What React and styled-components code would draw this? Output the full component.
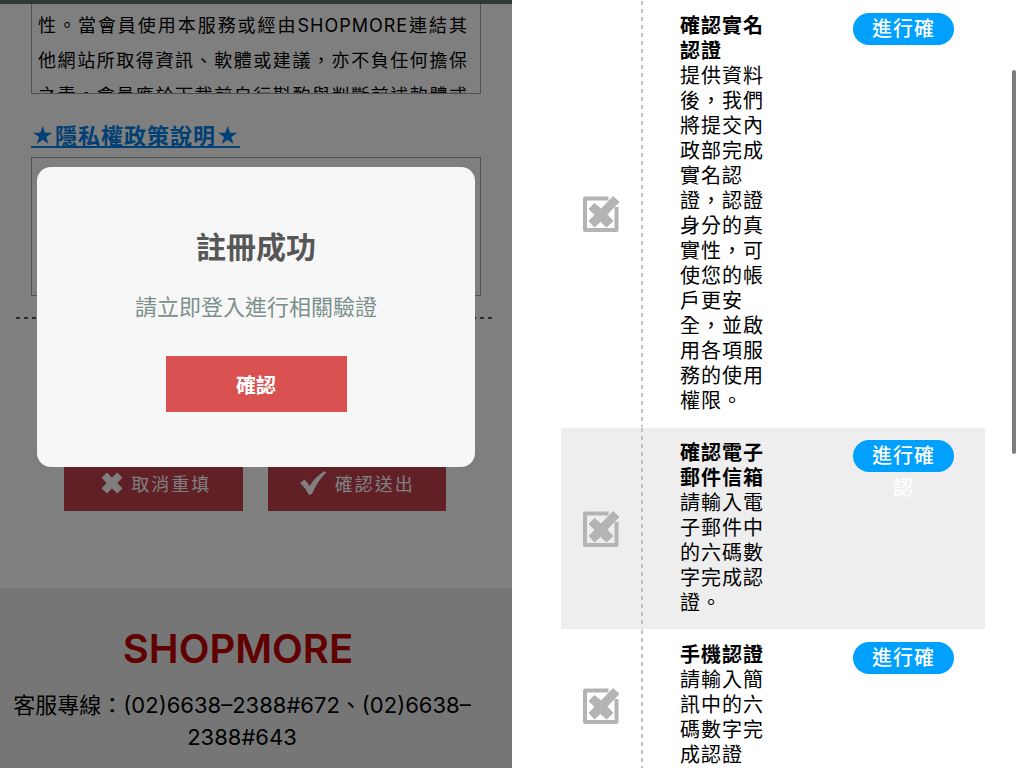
import styled, { createGlobalStyle } from 'styled-components'

const GlobalStyle = createGlobalStyle`
  * {
    box-sizing: border-box;
  }
  body {
    margin: 0;
    background: #ffffff;
    color: #000000;
    font-family: Inter, "Noto Sans CJK TC", sans-serif;
  }
  p, h1, h2, h3, ul {
    margin: 0;
    padding: 0;
  }
`

const steps = [
  {
    id: 'identity',
    title: '確認實名認證',
    text: '提供資料後，我們將提交內政部完成實名認證，認證身分的真實性，可使您的帳戶更安全，並啟用各項服務的使用權限。',
    action: '進行確',
  },
  {
    id: 'email',
    title: '確認電子郵件信箱',
    text: '請輸入電子郵件中的六碼數字完成認證。',
    action: '進行確認',
    shaded: true,
  },
  {
    id: 'phone',
    title: '手機認證',
    text: '請輸入簡訊中的六碼數字完成認證',
    action: '進行確',
  },
]

const CrossIcon = () => (
  <svg width="28" height="22" viewBox="-6 0 28 22" aria-hidden="true">
    <path
      d="M6 1 L11 6.2 L16.200 1 L21 5.600 L15.800 11 L21 16.400 L16.200 21 L11 15.800 L6 21 L1 16.400 L6.200 11 L1 5.600 Z"
      fill="currentColor"
      stroke="currentColor"
      strokeLinejoin="round"
    />
  </svg>
)

const TickIcon = () => (
  <svg width="28" height="26" viewBox="0 0 28 26" aria-hidden="true">
    <path
      d="M1 13 L5.500 9.500 Q8.500 12.500 10.500 16 Q16.500 6.500 25.500 1 L27.300 2.500 Q18.500 11 13 24 L10 25 Q6.500 18 1 13 Z"
      fill="currentColor"
    />
  </svg>
)

const BoxIcon = () => (
  <svg width="38" height="38" viewBox="0 0 38 38" aria-hidden="true">
    <path d="M26.500 3.500 H3 V35 H34.500 V12" fill="none" stroke="#b4b4b4" strokeWidth="4" strokeLinejoin="round" />
    <path
      d="M12.500 8.500 L19 14 L31 1.500 L37 7 L25 19.500 L31 26 L24.500 32 L18.500 26.500 L12.500 32 L7 26 L13 19.800 L7 14 Z"
      fill="#b4b4b4"
      stroke="#b4b4b4"
      strokeLinejoin="round"
    />
  </svg>
)

const App = () => {
  return (
    <>
      <GlobalStyle />
      <Screens>
        <SignUp>
          <TopBar />
          <Form>
            <Terms>
              性。當會員使用本服務或經由SHOPMORE連結其他網站所取得資訊、軟體或建議，亦不負任何擔保之責。會員應於下載前自行斟酌與判斷前述軟體或
            </Terms>
            <PolicyLink href="#privacy">★隱私權政策說明★</PolicyLink>
            <Policy id="privacy" />
          </Form>
          <Rule />
          <Actions>
            <FormButton type="reset">
              <CrossIcon />
              取消重填
            </FormButton>
            <FormButton type="submit">
              <TickIcon />
              確認送出
            </FormButton>
          </Actions>
          <Footer>
            <Logo>SHOPMORE</Logo>
            <Hotline>客服專線：(02)6638–2388#672、(02)6638–2388#643</Hotline>
          </Footer>
          <Overlay>
            <Dialog role="dialog" aria-labelledby="dialog-title">
              <DialogTitle id="dialog-title">註冊成功</DialogTitle>
              <DialogText>請立即登入進行相關驗證</DialogText>
              <ConfirmButton type="button">確認</ConfirmButton>
            </Dialog>
          </Overlay>
        </SignUp>

        <Verify>
          <StepList>
            {steps.map((step) => (
              <Step key={step.id} $shaded={step.shaded}>
                <StepIcon>
                  <BoxIcon />
                </StepIcon>
                <Divider />
                <StepBody>
                  <StepTitle>{step.title}</StepTitle>
                  <p>{step.text}</p>
                </StepBody>
                <StepAction>
                  <Pill href={`#${step.id}`}>{step.action}</Pill>
                </StepAction>
              </Step>
            ))}
          </StepList>
          <ScrollThumb />
        </Verify>
      </Screens>
    </>
  )
}

const Screens = styled.main`
  display: grid;
  grid-template-columns: 1fr 1fr;
  height: 100vh;
  overflow: hidden;
`

const SignUp = styled.section`
  position: relative;
  display: flex;
  flex-direction: column;
  min-width: 0;
  overflow: hidden;
`

const TopBar = styled.div`
  flex: none;
  height: 4px;
  background: #646e6e;
`

const Form = styled.div`
  display: flex;
  flex-direction: column;
  align-items: flex-start;
  padding: 0 31px;
`

const Terms = styled.div`
  width: 100%;
  height: 90px;
  padding: 4px 12px 0 6px;
  border: 1px solid #a0a0a0;
  border-top: 0;
  overflow: hidden;
  font-size: 18px;
  line-height: 35px;
  letter-spacing: 1px;
  text-align: justify;
  text-align-last: justify;
`

const PolicyLink = styled.a`
  margin: 27px 0 6px;
  color: #0080e8;
  font-size: 22px;
  font-weight: 700;
  line-height: 30px;
  letter-spacing: 1px;
  text-decoration: underline;
`

const Policy = styled.div`
  width: 100%;
  height: 139px;
  border: 1px solid #a0a0a0;
`

const Rule = styled.hr`
  flex: none;
  align-self: stretch;
  height: 2px;
  margin: 21px 16px 0;
  border: 0;
  background: repeating-linear-gradient(90deg, #585858 0 4px, transparent 4px 8px);
`

const Actions = styled.div`
  display: flex;
  justify-content: center;
  gap: 25px;
  margin: 136px 66px 77px 64px;
`

const FormButton = styled.button`
  display: flex;
  flex: 1;
  align-items: center;
  justify-content: center;
  gap: 8px;
  height: 56px;
  padding: 0;
  border: 0;
  background: #c0404c;
  color: #ffffff;
  font-family: inherit;
  font-size: 18px;
  letter-spacing: 2px;
`

const Footer = styled.footer`
  flex: 1;
  padding: 36px 28px 0 0;
  background: #ececec;
  text-align: center;
`

const Logo = styled.h2`
  padding-right: 8px;
  color: #c00000;
  font-size: 40px;
  font-weight: 600;
  line-height: 50px;
`

const Hotline = styled.p`
  margin-top: 15px;
  font-size: 22px;
  line-height: 32px;
`

const Overlay = styled.div`
  position: absolute;
  inset: 0;
  padding: 167px 37px 0;
  background: rgba(0, 0, 0, 0.5);
`

const Dialog = styled.div`
  display: flex;
  flex-direction: column;
  align-items: center;
  padding: 60px 0 55px;
  border-radius: 14px;
  background: #f7f7f7;
`

const DialogTitle = styled.h1`
  color: #575757;
  font-size: 30px;
  font-weight: 700;
  line-height: 40px;
`

const DialogText = styled.p`
  margin: 25px 0 34px;
  color: #7a908c;
  font-size: 22px;
  line-height: 30px;
`

const ConfirmButton = styled.button`
  width: 181px;
  height: 56px;
  border: 0;
  background: #d95151;
  color: #ffffff;
  font-family: inherit;
  font-size: 20px;
  font-weight: 700;
`

const Verify = styled.section`
  position: relative;
  min-width: 0;
  overflow: hidden;
`

const StepList = styled.ul`
  display: grid;
  gap: 1px;
  margin: 0 39px 0 49px;
  padding-top: 1px;
  list-style: none;
  font-size: 20px;
  line-height: 25px;
  letter-spacing: 1px;
`

const Step = styled.li`
  display: grid;
  grid-template-columns: 80px 2px 1fr 132px;
  background: ${(props) => (props.$shaded ? '#eeeeee' : 'transparent')};
`

const StepIcon = styled.div`
  display: flex;
  align-items: center;
  justify-content: center;
`

const Divider = styled.div`
  background: repeating-linear-gradient(#c0c0c0 0 4px, transparent 4px 8px);
`

const StepBody = styled.div`
  padding: 13px 86px 13px 37px;
`

const StepTitle = styled.h3`
  font-size: 20px;
  font-weight: 700;
`

const StepAction = styled.div`
  padding: 12px 31px 0 0;
`

const Pill = styled.a`
  display: block;
  height: 32px;
  padding: 0 14px;
  border-radius: 16px;
  background: #00a0ff;
  color: #ffffff;
  font-weight: 500;
  line-height: 32px;
  text-align: center;
  text-decoration: none;
`

const ScrollThumb = styled.div`
  position: absolute;
  top: 70px;
  right: 8px;
  width: 4px;
  height: 384px;
  border-radius: 2px;
  background: #7c7c7c;
`

export default App
